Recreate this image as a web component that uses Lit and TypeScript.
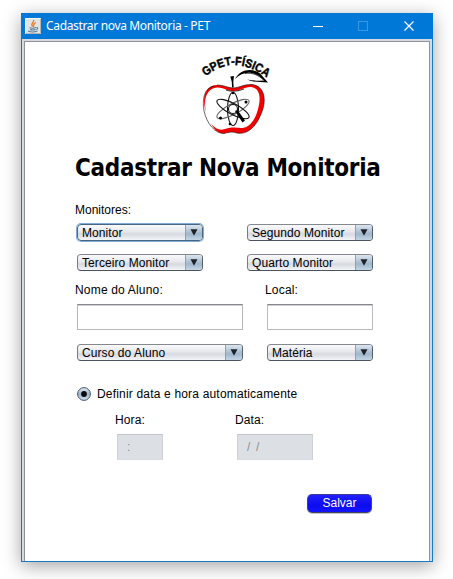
import { LitElement, html, css, svg } from "lit";
import { customElement, property } from "lit/decorators.js";

@customElement("combo-box")
class ComboBox extends LitElement {
  @property() label = "";
  @property({ type: Boolean, reflect: true }) focused = false;
  static styles = css`
    :host { display: block; height: 17px; }
    .box {
      box-sizing: border-box; height: 17px; display: flex; overflow: hidden;
      border: 1px solid; border-color: #85888f #565f6c #4b535f #777b84; border-radius: 4px;
      background: linear-gradient(#fafafc, #e6e8ec 45%, #d6d9df 60%, #f3f5f9);
      font: 12px/16px "Liberation Sans", Arial, sans-serif; color: #000; letter-spacing: .08px;
    }
    .text { flex: 1; padding-left: 4px; white-space: nowrap; }
    .arrow {
      width: 16px; display: flex; justify-content: center; border-left: 1px solid #8ba3b8;
      background: linear-gradient(#dce6ef, #a9bed1 50%, #a0b8cc 60%, #c2d5e4);
    }
    svg { width: 8px; height: 15px; }
    :host([focused]) .box { border-color: #456685; box-shadow: 0 0 0 1px #7fabd4; }
  `;
  render() {
    return html`<div class="box"><span class="text">${this.label}</span>
      <span class="arrow"><svg viewBox="0 0 8 15"><path d="M.5 4.2h7L4 10.8z" fill="#1c2228" /></svg></span></div>`;
  }
}

@customElement("pet-logo")
class PetLogo extends LitElement {
  static styles = css`
    :host { display: block; width: 90px; height: 92px; }
    svg { display: block; overflow: visible; }
    .name { font: bold 12px "Liberation Sans", Arial, sans-serif; stroke: #000; stroke-width: .45px; }
  `;
  render() {
    return html`<svg width="90" height="95" viewBox="0 0 90 95">
      <path id="arc" d="M15.500 31.500Q44 8.500 76 32" fill="none" />
      <text class="name"><textPath href="#arc" textLength="67" lengthAdjust="spacingAndGlyphs">GPET-FÍSICA</textPath></text>
      <path fill="#f20000" d="M16 67C11 52 16 40 27 40C34 40 38 43 43 43C49 43 54 39 62 39.500C75 41 77 56 71 69C66 82 57 90 47 88C43 86.500 39 87 34 88.500C28 88.500 24 84 21 79C25 83 29 85.500 33 84.500C39 82 46 82 51 83C59 83.500 65 75 67.500 66C72 51 69 43 61 42C55 41.500 50 46 44 46C37 46 32 42 27 42.500C17 43 13 54 16 67Z" />
      <path d="M27 40C34 40 38 43 43 43C49 43 54 39 62 39.500C75 41 77 56 71 69C66 82 57 90 47 88C43 86.500 39 87 34 88.500C25 88.500 17 79 14 66C12 54 14 43 24 41" fill="none" stroke="#200" stroke-width=".6" />
      <path d="M36 45Q44 48 54 44" fill="none" stroke="#111" stroke-width=".8" />
      <path d="M40.300 31.500L44 31Q42.800 37 43.700 42.500L42 42.500Q42.500 37 40.300 31.500Z" />
      <path d="M45 34C50 24 63 22 71 29.500L78 37.500C69 37 62 37 57 34.500Q65 36 74 35.500C65 26 54 25 45 34Z" />
      <path d="M55 28.500C63 27.500 68 30 73 34.500" fill="none" stroke="#222" stroke-width=".8" />
      <g fill="none" stroke="#111" stroke-width="1.100">
        <ellipse cx="43" cy="64" rx="5.500" ry="16.500" />
        <ellipse cx="43" cy="64" rx="5.500" ry="18" transform="rotate(62 43 64)" stroke="#666" />
        <ellipse cx="43" cy="64" rx="5.500" ry="18" transform="rotate(-62 43 64)" />
        <circle cx="43" cy="64" r="4.500" />
      </g>
      <path d="M45 66L47.500 65L55 75.500L52.500 77.500Z" />
      <g><circle cx="30.500" cy="73" r="1.500" /><circle cx="56" cy="57" r="1.500" /><circle cx="43" cy="48" r="1.300" /><circle cx="40" cy="79" r="1.300" /></g>
    </svg>`;
  }
}

const javaIcon = svg`<rect width="16" height="16" fill="#e2e3e3"/><path d="M.5 15.500V.500H15.500" fill="none" stroke="#f5f5f5"/><path d="M15.500 1V15.500H1" fill="none" stroke="#b5b5b5"/>
  <path d="M8.500 2C10 4 5 5 7.500 8.500M10.800 4.500C7.500 6 9.500 7 8.300 9" fill="none" stroke="#e27a2a" stroke-width="1.300"/>
  <path d="M4.500 9.800Q8 10.800 11 9.600M5 11.600Q8 12.500 10.500 11.500M3 13Q7.500 15 12.500 13M11.300 9.500Q14 9.500 11.500 11.800" fill="none" stroke="#527d9b" stroke-width="1.100"/>`;

@customElement("app-root")
class AppRoot extends LitElement {
  static styles = css`
    :host {
      display: block; box-sizing: border-box; width: 453px; height: 579px; padding: 13px 20px 17px 21px;
      overflow: hidden; background: #fff; color: #000;
      font: 12px/16px "Liberation Sans", Arial, sans-serif;
    }
    .window {
      box-sizing: border-box; width: 412px; height: 549px; display: flex; flex-direction: column;
      border: 1px solid #1a7ac9; border-top: 0; background: #d6d9df;
      box-shadow: 0 4px 17px rgba(0, 0, 0, .36);
    }
    .bar { height: 26px; flex: none; margin: 0 -1px; background: #0078d7; display: flex; align-items: center; }
    .java { width: 16px; height: 16px; margin-left: 4px; }
    .caption { margin-left: 5px; flex: 1; color: #fff; font: 12px/26px "Noto Sans", "Open Sans", sans-serif; letter-spacing: -.34px; white-space: nowrap; }
    .controls { width: 130px; height: 26px; }
    .body {
      flex: 1; margin: 2px 2px 0; border: 1px solid #8f929b; border-bottom: 0; background: #fff;
      padding: 3px 0 0 50px;
    }
    pet-logo { margin-left: 115px; }
    h1 { margin: 15px 0 0; height: 33px; font: bold 24px/33px "DejaVu Sans Condensed", "DejaVu Sans", sans-serif; letter-spacing: -.31px; white-space: nowrap; }
    .row { display: flex; }
    .names { margin-top: 17px; height: 22px; }
    .pair { margin-left: 2px; gap: 44px; height: 30px; }
    .pair combo-box { width: 126px; }
    .labels { height: 22px; display: grid; grid-template-columns: 190px 1fr; margin-top: -2px; letter-spacing: .18px; }
    .grid { display: grid; grid-template-columns: 166px 106px; column-gap: 24px; row-gap: 14px; margin-left: 2px; }
    .field { box-sizing: border-box; height: 26px; border: 1px solid #b7b8bb; border-top-color: #85878a; box-shadow: inset 0 1px #d0d1d3; }
    .option { margin: 25px 0 0 2px; gap: 6px; align-items: center; height: 16px; letter-spacing: .18px; }
    .when { display: grid; grid-template-columns: 120px 1fr; margin: 10px 0 0 40px; height: 22px; letter-spacing: .12px; }
    .masks { margin-left: 42px; gap: 74px; }
    .mask {
      box-sizing: border-box; height: 26px; padding-left: 9px; background: #dce0e5; color: #8e8f91; line-height: 25px;
      border: 1px solid #cfd2d7; border-top-color: #bfc2c8; border-bottom-color: #d8dce1; white-space: pre;
    }
    .hour { width: 46px; }
    .date { width: 76px; letter-spacing: -.3px; }
    .save {
      display: block; box-sizing: border-box; width: 65px; height: 19px; margin: 34px 0 0 232px; padding: 0;
      border: 1px solid #3c3c94; border-bottom-color: #44475c; border-radius: 5px; color: #fff;
      background: linear-gradient(#2020ff, #0c0cf0 60%, #1414ff); font: 12px/17px "Liberation Sans", Arial, sans-serif;
      box-shadow: 0 1px #c4c6ca;
    }
  `;
  render() {
    return html`<div class="window">
      <div class="bar">
        <svg class="java" viewBox="0 0 16 16">${javaIcon}</svg>
        <span class="caption">Cadastrar nova Monitoria - PET</span>
        <svg class="controls" viewBox="0 0 130 26" fill="none">
          <path d="M10 13.500H20" stroke="#fff" />
          <rect x="55.500" y="8.500" width="9" height="9" stroke="#3c97e0" />
          <path d="M101.500 8.500L110.500 17.500M110.500 8.500L101.500 17.500" stroke="#fff" stroke-width="1.200" />
        </svg>
      </div>
      <div class="body">
        <pet-logo></pet-logo>
        <h1>Cadastrar Nova Monitoria</h1>
        <div class="names">Monitores:</div>
        <div class="row pair"><combo-box focused label="Monitor"></combo-box><combo-box label="Segundo Monitor"></combo-box></div>
        <div class="row pair"><combo-box label="Terceiro Monitor"></combo-box><combo-box label="Quarto Monitor"></combo-box></div>
        <div class="labels"><span>Nome do Aluno:</span><span>Local:</span></div>
        <div class="grid">
          <div class="field"></div><div class="field"></div>
          <combo-box label="Curso do Aluno"></combo-box><combo-box label="Matéria"></combo-box>
        </div>
        <div class="row option">
          <svg width="14" height="14" viewBox="0 0 14 14">
            <defs><linearGradient id="g" x2="0" y2="1"><stop stop-color="#e4ecf3" /><stop offset=".5" stop-color="#9db4c8" /><stop offset="1" stop-color="#d3e2ef" /></linearGradient></defs>
            <circle cx="7" cy="7" r="6.400" fill="url(#g)" stroke="#44566a" /><circle cx="7" cy="7" r="2.900" fill="#0a0a0c" />
          </svg><span>Definir data e hora automaticamente</span>
        </div>
        <div class="when"><span>Hora:</span><span>Data:</span></div>
        <div class="row masks"><div class="mask hour">:</div><div class="mask date">/  /</div></div>
        <button class="save">Salvar</button>
      </div>
    </div>`;
  }
}
